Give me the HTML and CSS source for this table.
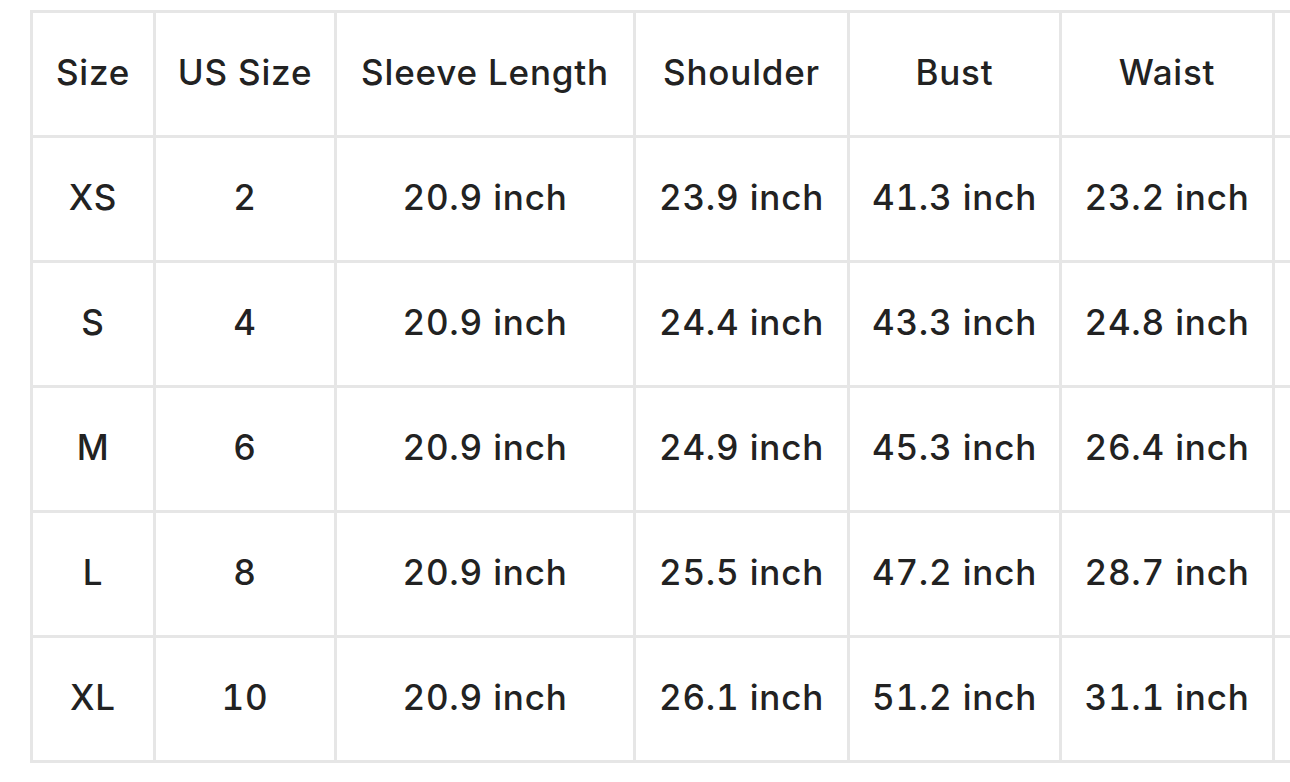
FILE: index.html
```html
<!DOCTYPE html>
<html lang="en">
<head>
<meta charset="utf-8">
<title>Size Chart</title>
<link rel="stylesheet" href="styles.css">
</head>
<body>
<div class="wrap">
<table class="chart">
  <colgroup>
    <col class="c1"><col class="c2"><col class="c3"><col class="c4"><col class="c5"><col class="c6"><col class="c7">
  </colgroup>
  <thead>
    <tr><th>Size</th><th>US Size</th><th>Sleeve Length</th><th>Shoulder</th><th>Bust</th><th>Waist</th><th></th></tr>
  </thead>
  <tbody>
    <tr><td>XS</td><td>2</td><td>20.9 inch</td><td>23.9 inch</td><td>41.3 inch</td><td>23.2 inch</td><td></td></tr>
    <tr><td>S</td><td>4</td><td>20.9 inch</td><td>24.4 inch</td><td>43.3 inch</td><td>24.8 inch</td><td></td></tr>
    <tr><td>M</td><td>6</td><td>20.9 inch</td><td>24.9 inch</td><td>45.3 inch</td><td>26.4 inch</td><td></td></tr>
    <tr><td>L</td><td>8</td><td>20.9 inch</td><td>25.5 inch</td><td>47.2 inch</td><td>28.7 inch</td><td></td></tr>
    <tr><td>XL</td><td>10</td><td>20.9 inch</td><td>26.1 inch</td><td>51.2 inch</td><td>31.1 inch</td><td></td></tr>
  </tbody>
</table>
</div>
</body>
</html>
```
FILE: styles.css
```css
html, body {
  margin: 0;
  padding: 0;
  background: #ffffff;
  overflow: hidden;
  width: 1290px;
  height: 782px;
}
.wrap {
  padding: 10px 0 0 30px;
  width: 1500px;
}
.chart {
  border-collapse: separate;
  border-spacing: 0;
  table-layout: fixed;
  width: 1460px;
  border-left: 3px solid #e6e6e6;
  border-top: 3px solid #e6e6e6;
  font-family: Inter, "Open Sans", sans-serif;
  font-size: 35px;
  letter-spacing: 0.8px;
  font-feature-settings: "tnum" 1;
  color: #222222;
}
.c1 { width: 123px; }
.c2 { width: 181px; }
.c3 { width: 299px; }
.c4 { width: 214px; }
.c5 { width: 212px; }
.c6 { width: 213px; }
.c7 { width: 215px; }
.chart th, .chart td {
  box-sizing: border-box;
  height: 125px;
  padding: 0 0 5px 0;
  border-right: 3px solid #e6e6e6;
  border-bottom: 3px solid #e6e6e6;
  text-align: center;
  vertical-align: middle;
  font-weight: 500;
  white-space: nowrap;
}
```
